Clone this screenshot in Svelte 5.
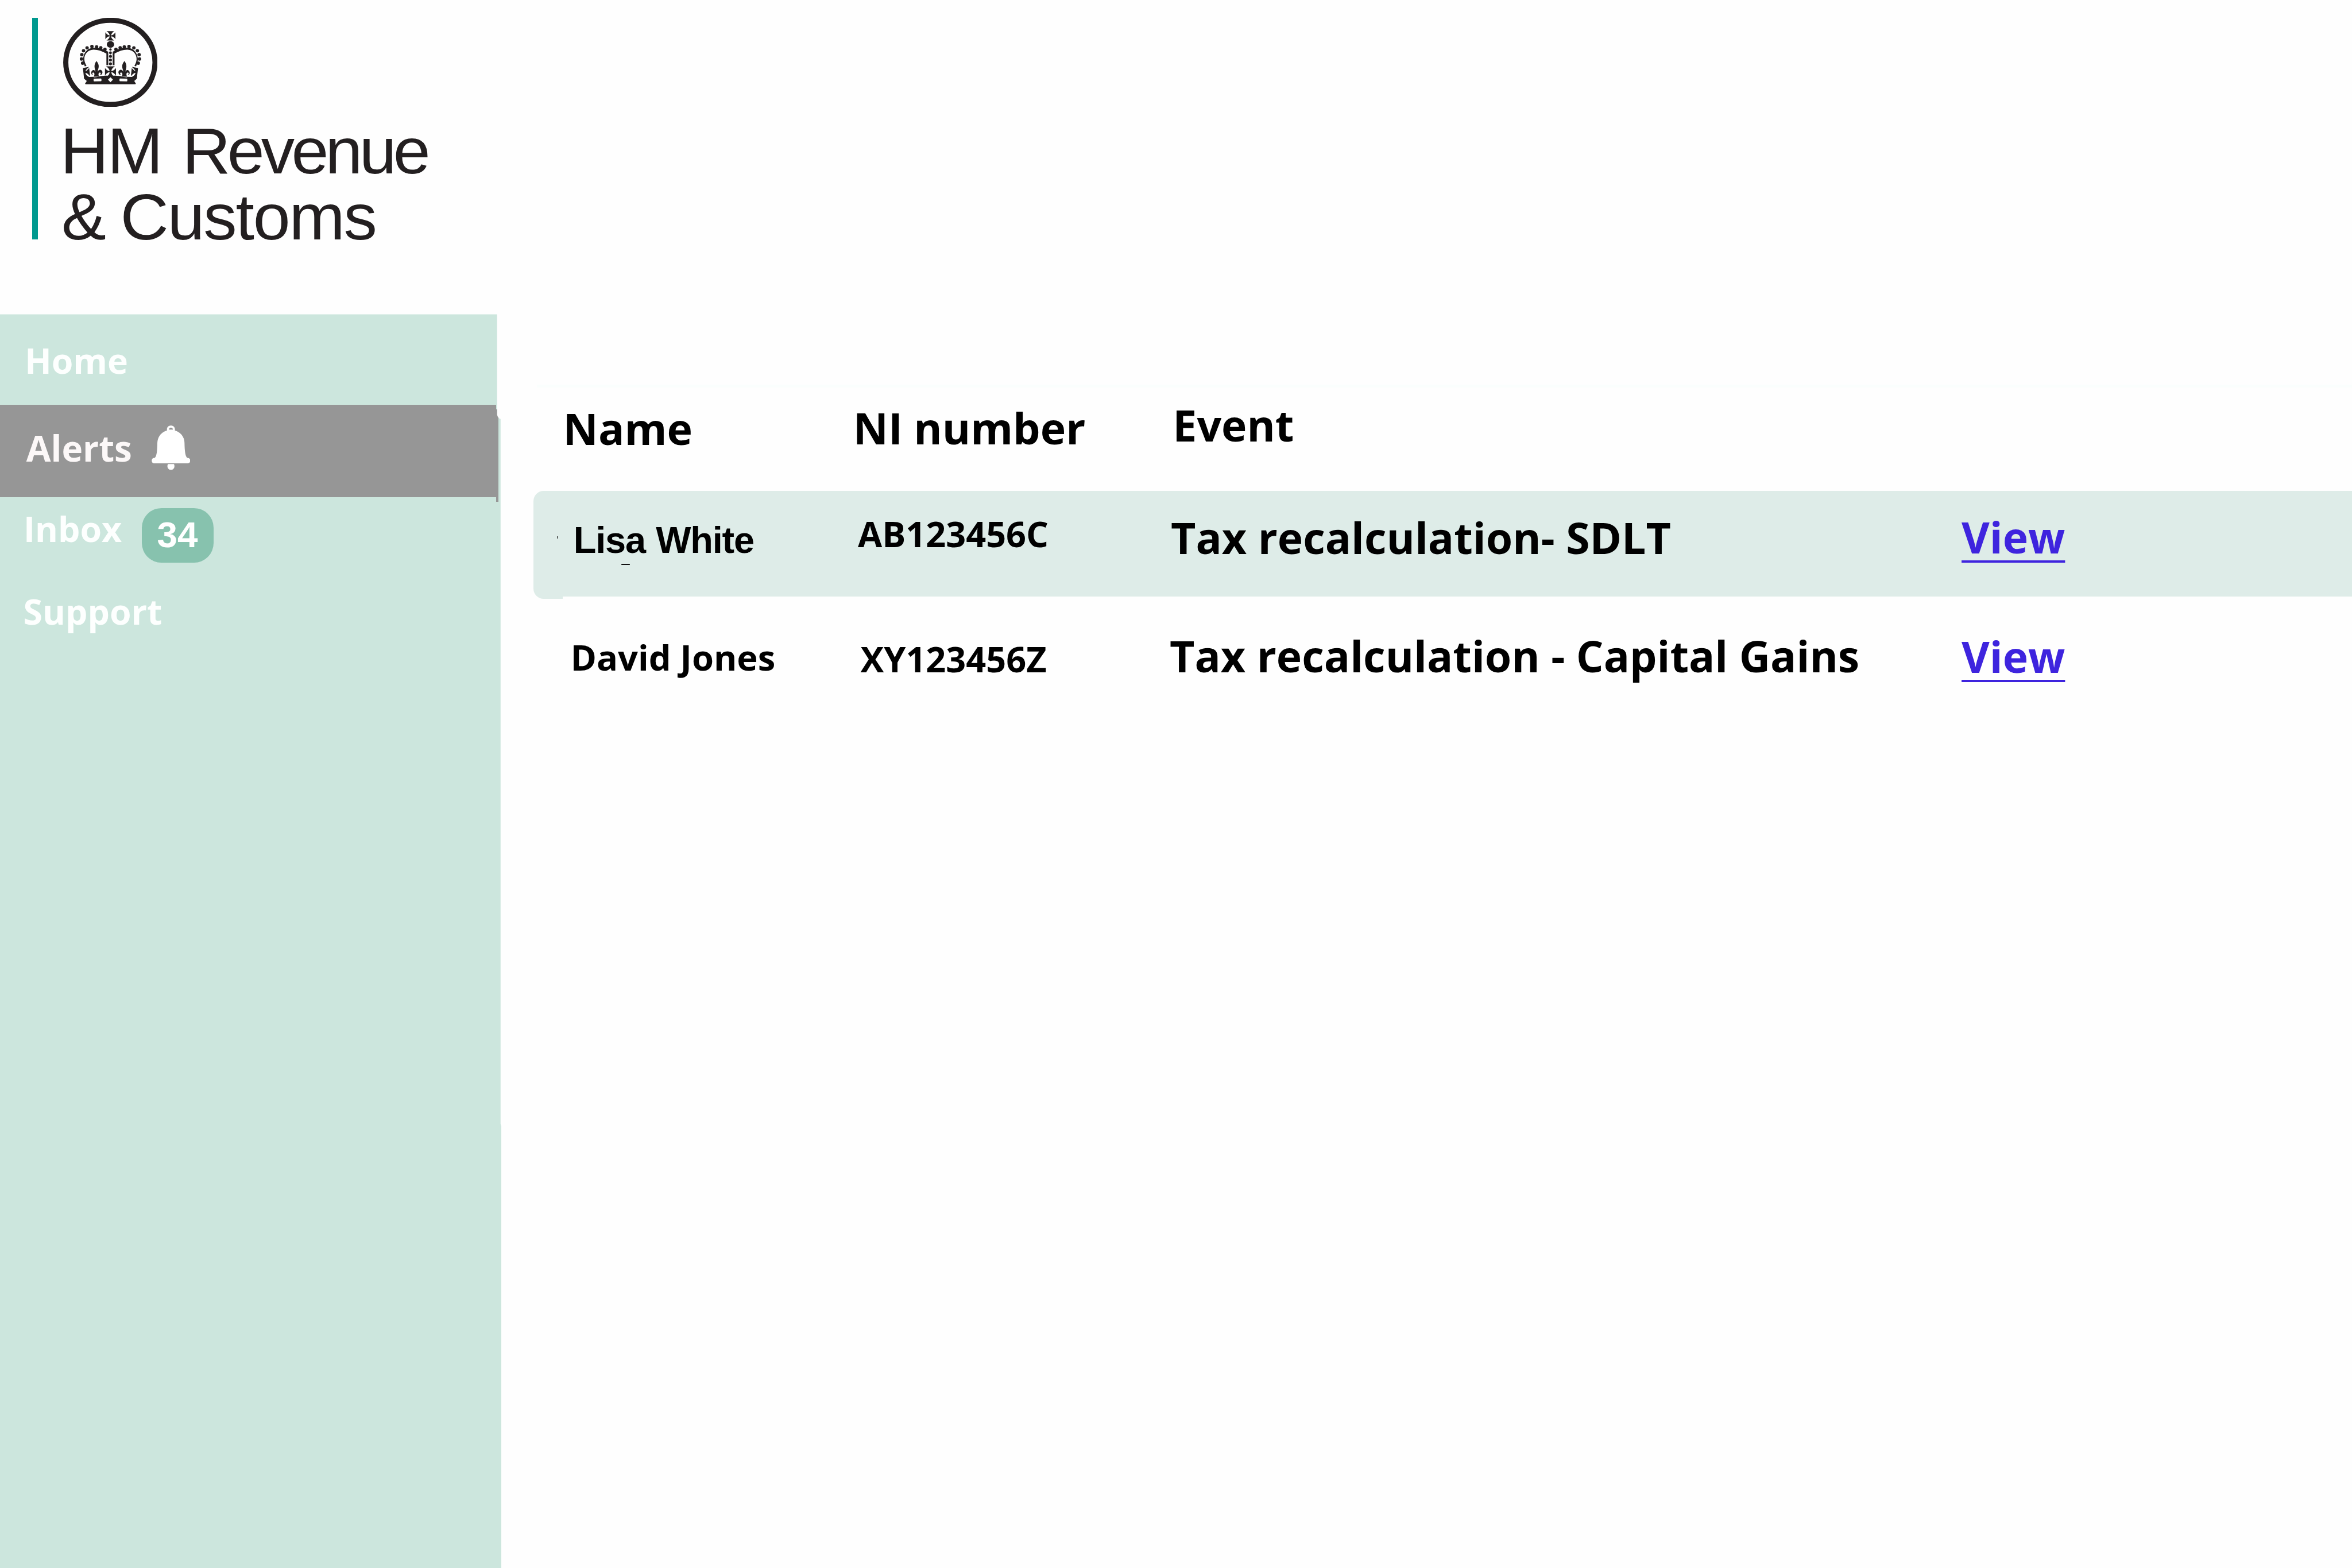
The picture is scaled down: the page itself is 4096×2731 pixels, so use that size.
<script>
  // Pearls along the left arch of the crown; the right arch mirrors them.
  const pearls = [
    [211, 392], [202, 360], [205, 327], [218, 297], [245, 275], [282, 265], [318, 268], [350, 274], [382, 286]
  ];
  const centre = [288, 313, 340, 368, 397];
  const rows = [
    {
      kind: 'lisa', active: true, name: 'Lisa White', ni: 'AB123456C',
      event: 'Tax recalculation- SDLT'
    },
    {
      kind: 'david', active: false, name: 'David Jones', ni: 'XY123456Z',
      event: 'Tax recalculation - Capital Gains'
    }
  ];
</script>

{#snippet halfCrown()}
  <path d="M228 417 C216 390 210 362 219 336 C228 302 256 277 291 275 C335 272 374 286 407 305 V407 H393 V319 C358 299 326 288 293 289 C252 291 223 322 224 362 C225 382 232 397 241 412 Z" />
  {#each pearls as [x, y]}
    <circle cx={x} cy={y} r="13" />
  {/each}
  <!-- fleur-de-lis -->
  <path d="M317 376 C327 388 336 404 334 420 C333 434 328 444 325 459 C331 446 340 441 350 444 C361 448 366 460 361 471 C358 479 351 484 344 480 C352 476 352 465 343 464 C334 464 328 476 337 495 H297 C306 476 300 464 292 464 C283 465 283 476 290 480 C284 484 278 478 277 468 C276 454 286 443 297 445 C303 447 307 451 310 459 C307 444 303 434 302 420 C301 404 307 389 317 376 Z" />
  <!-- outer cross -->
  <path d="M213 430 L260 421 C252 430 240 436 232 455 C244 450 252 440 261 430 L268 492 C258 484 251 469 232 467 C236 484 249 491 260 498 L297 496 V510 H222 Z" />
{/snippet}

<div class="page">
  <header>
    <div class="brand">
      <div class="bar"></div>
      <div class="lockup">
        <svg class="crest" viewBox="62 45 723 683" aria-hidden="true">
          <ellipse cx="423.5" cy="386.5" rx="341.5" ry="322.5" fill="none" stroke="#231f20" stroke-width="39.5" />
          <g fill="#231f20">
            <path d="M393 147 H453 C443 154 431 163 429 180 C445 177 455 167 462 156 V210 C455 198 446 188 429 187 C431 203 442 211 453 219 H393 C405 211 416 203 418 187 C401 188 392 198 385 210 V156 C392 167 402 177 418 180 C416 163 404 154 393 147 Z" />
            <ellipse cx="424" cy="249" rx="28" ry="26" />
            {#each centre as y, i}
              <circle cx="424" cy={y} r={i === 0 ? 9 : 10.5 + i * 0.3} />
            {/each}
            <g>{@render halfCrown()}</g>
            <g transform="translate(848 0) scale(-1 1)">{@render halfCrown()}</g>
            <path d="M390 416 H458 C445 424 433 434 430 453 C447 450 459 440 466 429 V488 C456 474 447 462 430 461 C432 476 441 486 452 495 H396 C408 486 416 476 418 461 C401 462 391 474 382 488 V429 C390 440 401 450 418 453 C415 434 403 424 390 416 Z" />
            <path fill-rule="evenodd" d="M221 490 C240 503 290 504 330 496 C360 488 385 488 424 488 C463 488 488 488 518 496 C558 504 608 503 627 490 L624 513 L606 528 L618 548 Q618 554 612 554 H236 Q230 554 230 548 L243 528 L224 513 Z M424 500 L405 519 L424 538 L443 519 Z M300 511 Q295 511 295 517 V526 Q295 532 300 532 L350 531 Q355 531 355 526 V515 Q355 510 350 510 Z M548 511 L498 510 Q493 510 493 515 V526 Q493 531 498 531 L548 532 Q553 532 553 526 V517 Q553 511 548 511 Z" />
          </g>
        </svg>
        <div class="title first"><span class="hm">HM</span> Revenue</div>
        <div class="title second">&amp; Customs</div>
      </div>
    </div>
  </header>

  <div class="body">
    <nav>
      <div class="item home"><span class="label">Home</span></div>
      <div class="item alerts">
        <span class="label">Alerts</span>
        <svg class="bell" viewBox="140 106 297 341" aria-hidden="true">
          <path fill="#fff" fill-rule="evenodd" d="M258 144 C254 122 268 107 288 107 C308 107 322 122 318 144 C364 157 392 195 392 243 C393 290 396 340 413 354 C427 353 436 362 436 375 C436 388 427 396 415 396 H161 C149 396 141 388 141 375 C141 362 150 353 164 354 C181 340 183 290 184 243 C185 195 212 157 258 144 Z M273 138 H303 C303 128 297 122 288 122 C279 122 273 128 273 138 Z" />
          <path fill="#fff" d="M266 402 H311 Q315 408 315 418 C315 434 304 446 288 446 C272 446 261 434 261 418 Q261 408 266 402 Z" />
        </svg>
      </div>
      <div class="item inbox"><span class="label">Inbox</span><span class="badge">34</span></div>
      <div class="item support"><span class="label">Support</span></div>
    </nav>

    <main>
      <div class="rule"></div>
      <div class="row head">
        <span class="cell name">Name</span>
        <span class="cell ni">NI number</span>
        <span class="cell event">Event</span>
      </div>
      {#each rows as r}
        <div class="row {r.kind}" class:active={r.active}>
          <span class="cell name">{r.name}</span>
          <span class="cell ni">{r.ni}</span>
          <span class="cell event">{r.event}</span>
          <span class="cell view"><a href="#view">View</a></span>
          {#if r.active}
            <i class="tick"></i>
            <i class="dash"></i>
          {/if}
        </div>
      {/each}
    </main>
  </div>
</div>

<style>
  /* 1rem is one sixtieth of the window's width */
  :global(html) { font-size: calc(100vw / 60); }
  :global(body) { margin: 0; background: #fefefe; overflow: hidden; }

  .page {
    display: flex;
    flex-direction: column;
    height: 100vh;
    overflow: hidden;
    background: #fefefe;
    color: #000;
    font-family: "Open Sans", "Noto Sans", sans-serif;
    font-weight: 700;
    white-space: nowrap;
  }

  header { flex: none; height: 8.02rem; box-sizing: border-box; padding: 0.45rem 0 0 0.827rem; }
  .brand { display: flex; }
  .bar { width: 0.145rem; height: 5.66rem; background: #00998f; }
  .lockup { margin-left: 0.571rem; }
  .crest { display: block; width: 2.41rem; height: 2.277rem; margin: 0 0 0.288rem 0.064rem; }
  .title {
    font: 400 1.66rem/1.68rem "Liberation Sans", Arial, sans-serif;
    color: #231f20;
    transform: scaleX(1.03);
    transform-origin: 0 0;
  }
  .first { letter-spacing: -0.082rem; word-spacing: 0.127rem; }
  .hm { letter-spacing: -0.035rem; }
  .second { letter-spacing: -0.031rem; word-spacing: -0.05rem; margin-left: 0.02rem; }

  .body { flex: 1; display: flex; min-height: 0; }

  nav {
    flex: none;
    width: 12.79rem;
    background: #cce6dd;
    clip-path: polygon(0 0, 12.68rem 0, 12.68rem 2.56rem, 12.7rem 2.62rem, 12.74rem 2.66rem, 12.77rem 2.67rem, 12.77rem 20.66rem, 12.79rem 20.72rem, 12.79rem 100%, 0 100%);
  }
  .item { display: flex; align-items: flex-start; box-sizing: border-box; color: #fdfffe; }
  .label { font-size: 0.89rem; line-height: 1.2rem; }
  .home { height: 2.305rem; padding: 0.574rem 0 0 0.633rem; }
  .alerts {
    position: relative;
    width: 12.65rem;
    height: 2.36rem;
    padding: 0.517rem 0 0 0.67rem;
    background: #969696;
    color: #fcf8f8;
  }
  .alerts::after {
    content: "";
    position: absolute;
    left: 100%;
    top: 0.12rem;
    width: 0.06rem;
    height: 2.36rem;
    background: #969696;
  }
  .alerts .label { font-size: 0.908rem; }
  .bell { width: 0.99rem; height: 1.137rem; margin: 0.012rem 0 0 0.495rem; }
  .inbox { height: 2rem; padding: 0.208rem 0 0 0.6rem; }
  .badge {
    width: 1.83rem;
    height: 1.393rem;
    margin: 0.074rem 0 0 0.505rem;
    border-radius: 0.5rem;
    background: #87c2ae;
    color: #fff;
    font: 700 0.935rem/1.358rem "Liberation Sans", Arial, sans-serif;
    text-align: center;
  }
  .support { padding: 0.315rem 0 0 0.595rem; }

  main { flex: 1; min-width: 0; padding: 1.8rem 0 0 0.82rem; }
  .rule { height: 0.07rem; margin-left: 0.09rem; background: #fafefd; }
  .row {
    position: relative;
    display: grid;
    grid-template-columns: 7.4rem 8.08rem 20.2rem 1fr;
    align-items: start;
    box-sizing: border-box;
    padding-left: 0.75rem;
  }
  .cell { line-height: 1.2rem; font-size: 1.1rem; }

  .head { height: 2.63rem; }
  .head .cell { font-size: 1.104rem; margin: 0.432rem 0 0 0.005rem; }
  .head .event { font-size: 1.1rem; margin: 0.37rem 0 0 0.078rem; }

  .active { height: 2.694rem; background: #deece8; border-radius: 0.26rem 0 0 0.26rem; }
  .active::before {
    content: "";
    position: absolute;
    left: 0;
    bottom: -0.066rem;
    width: 0.75rem;
    height: 0.4rem;
    background: #deece8;
    border-radius: 0 0 0 0.26rem;
  }
  .lisa .name {
    font: 700 0.95rem/1.2rem "Liberation Sans", Arial, sans-serif;
    letter-spacing: -0.017rem;
    word-spacing: 0.023rem;
    margin: 0.668rem 0 0 0.27rem;
  }
  .row .ni { font-size: 0.896rem; }
  .head .ni { font-size: 1.102rem; }
  .lisa .ni { margin: 0.501rem 0 0 0.125rem; }
  .lisa .event { margin: 0.61rem 0 0 0.028rem; }
  .lisa .view { margin-top: 0.588rem; }

  .david .name { font-size: 0.9rem; margin: 0.957rem 0 0 0.193rem; }
  .david .ni { margin: 1.009rem 0 0 0.19rem; }
  .david .event { margin-top: 0.929rem; }
  .david .view { margin-top: 0.939rem; }

  a {
    color: #3e24de;
    text-decoration: underline;
    text-decoration-thickness: 0.054rem;
    text-underline-offset: 0.17rem;
  }

  .tick, .dash { position: absolute; background: #111; }
  .tick { left: 0.595rem; top: 1.155rem; width: 0.018rem; height: 0.06rem; }
  .dash { left: 2.24rem; top: 1.87rem; width: 0.22rem; height: 0.026rem; border-radius: 0.01rem; }
</style>
